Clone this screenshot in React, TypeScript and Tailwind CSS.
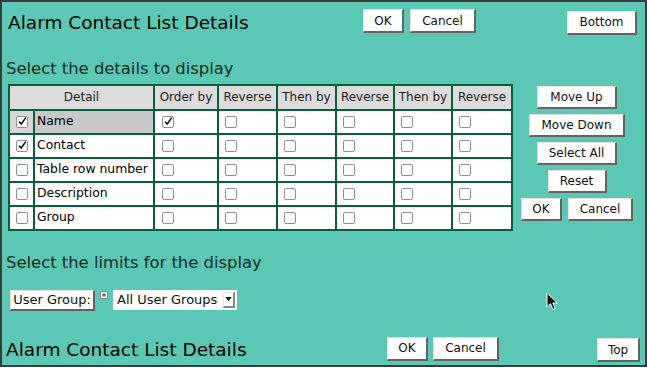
import React from "react";

const Btn = ({ children, w, h = "h-[24px]" }: { children: React.ReactNode; w: string; h?: string }) => (
  <button
    className={`${w} ${h} px-0 bg-white text-[12px] leading-none text-[#111] border-t border-l border-t-[#e2e2e2] border-l-[#e2e2e2] border-r-2 border-b-2 border-r-[#636363] border-b-[#636363] whitespace-nowrap`}
  >
    {children}
  </button>
);

const Check = ({ checked = false }: { checked?: boolean }) => (
  <span className="relative inline-block w-[12px] h-[12px] border border-[#8f8f8f] rounded-[2px] bg-white">
    {checked && (
      <svg viewBox="0 0 12 12" className="absolute left-[0px] top-[-1px] w-[11px] h-[11px]">
        <path d="M2.2 6.2 L4.6 8.8 L9.6 1.8" fill="none" stroke="#111" strokeWidth="1.7" />
      </svg>
    )}
  </span>
);

const rows = [
  { name: "Name", c0: true, order: true, hl: true },
  { name: "Contact", c0: true, order: false, hl: false },
  { name: "Table row number", c0: false, order: false, hl: false },
  { name: "Description", c0: false, order: false, hl: false },
  { name: "Group", c0: false, order: false, hl: false },
];

const headers = ["Order by", "Reverse", "Then by", "Reverse", "Then by", "Reverse"];

export default function App() {
  return (
    <div className="w-[647px] h-[368px] bg-white font-['DejaVu_Sans',sans-serif] relative">
      <div className="w-[647px] h-[367px] border-2 border-[#3a3a3a] bg-[#5bc8b5] flex flex-col">
        {/* Header */}
        <div className="flex items-start">
          <div className="w-[361px] pl-[6px] pt-[10px] text-[18.5px] leading-[22px] text-black whitespace-nowrap">
            Alarm Contact List Details
          </div>
          <div className="flex gap-[6px] pt-[7px]">
            <Btn w="w-[41px]">OK</Btn>
            <Btn w="w-[66px]">Cancel</Btn>
          </div>
          <div className="ml-auto mr-[8px] pt-[7px]">
            <Btn w="w-[70px]">Bottom</Btn>
          </div>
        </div>

        <div className="mt-[24px] h-[20px] pl-[4px] text-[16.4px] leading-[20px] text-[#0c2b22] whitespace-nowrap">
          Select the details to display
        </div>

        <div className="mt-[5px] flex items-start">
          <div className="ml-[6px] grid grid-cols-[23px_118px_62px_57px_57px_56px_56px_58px] gap-[2px] p-[2px] bg-[#07603c]">
            <div className="col-span-2 h-[23px] bg-[#dcdcdc] flex items-center justify-center text-[12px] text-[#222]">
              Detail
            </div>
            {headers.map((h, i) => (
              <div key={i} className="h-[23px] bg-[#dcdcdc] flex items-center justify-center text-[12px] text-[#222] whitespace-nowrap">
                {h}
              </div>
            ))}
            {rows.map((r, ri) => (
              <React.Fragment key={ri}>
                <div className={`h-[22px] flex items-center pl-[6px] ${r.hl ? "bg-[#d6d6d6]" : "bg-white"}`}>
                  <Check checked={r.c0} />
                </div>
                <div className={`h-[22px] flex items-center pl-[2px] text-[12.4px] text-black whitespace-nowrap ${r.hl ? "bg-[#c8c8c8]" : "bg-white"}`}>
                  {r.name}
                </div>
                <div className="h-[22px] bg-white flex items-center pl-[7px]">
                  <Check checked={r.order} />
                </div>
                {[0, 1, 2, 3, 4].map((k) => (
                  <div key={k} className="h-[22px] bg-white flex items-center pl-[6px]">
                    <Check />
                  </div>
                ))}
              </React.Fragment>
            ))}
          </div>

          <div className="ml-[8px] mt-[2px] w-[112px] flex flex-col items-center gap-[5px]">
            <Btn w="w-[80px]" h="h-[23px]">Move Up</Btn>
            <Btn w="w-[96px]" h="h-[23px]">Move Down</Btn>
            <Btn w="w-[80px]" h="h-[23px]">Select All</Btn>
            <Btn w="w-[59px]" h="h-[23px]">Reset</Btn>
            <div className="flex gap-[6px]">
              <Btn w="w-[41px]" h="h-[23px]">OK</Btn>
              <Btn w="w-[65px]" h="h-[23px]">Cancel</Btn>
            </div>
          </div>
        </div>

        <div className="mt-[22px] h-[20px] pl-[4px] text-[16.4px] leading-[20px] text-[#0c2b22] whitespace-nowrap">
          Select the limits for the display
        </div>

        <div className="mt-[17px] ml-[8px] flex items-start">
          <button className="w-[85px] h-[21px] px-0 bg-white text-[13px] leading-none text-[#111] border-t border-l border-t-[#e2e2e2] border-l-[#e2e2e2] border-r-2 border-b-2 border-r-[#636363] border-b-[#636363] whitespace-nowrap">
            User Group:
          </button>
          <span className="ml-[5px] mt-[1px] w-[8px] h-[8px] border border-[#8a8a8a] bg-white flex items-center justify-center">
            <svg viewBox="0 0 6 6" className="w-[6px] h-[6px]">
              <path d="M3 1 V5 M1 3 H5" stroke="#333" strokeWidth="1" />
            </svg>
          </span>
          <div className="ml-[5px] w-[124px] h-[20px] bg-white flex items-center justify-between pl-[4px] pr-[2px]">
            <span className="text-[13px] leading-none text-[#111] whitespace-nowrap">All User Groups</span>
            <span className="w-[12px] h-[16px] bg-white border-r-2 border-b-2 border-r-[#888] border-b-[#888] border-t border-l border-t-[#e8e8e8] border-l-[#e8e8e8] flex items-center justify-center">
              <svg viewBox="0 0 8 5" className="w-[7px] h-[4px]">
                <path d="M0 0 H8 L4 5 Z" fill="#111" />
              </svg>
            </span>
          </div>
        </div>

        <div className="mt-auto mb-[3px] flex items-start">
          <div className="w-[385px] pl-[4px] pt-[2px] text-[18.5px] leading-[22px] text-black whitespace-nowrap">
            Alarm Contact List Details
          </div>
          <div className="flex gap-[5px]">
            <Btn w="w-[41px]">OK</Btn>
            <Btn w="w-[66px]">Cancel</Btn>
          </div>
          <div className="ml-auto mr-[5px]">
            <Btn w="w-[43px]">Top</Btn>
          </div>
        </div>
      </div>

      {/* mouse cursor */}
      <svg className="absolute left-[546px] top-[292px] w-[13px] h-[20px]" viewBox="0 0 13 20">
        <path d="M1 1 L1 15 L4.5 11.8 L7 17.5 L9.2 16.5 L6.8 11 L11.5 11 Z" fill="#111" stroke="#fff" strokeWidth="1" strokeLinejoin="round" />
      </svg>
    </div>
  );
}
